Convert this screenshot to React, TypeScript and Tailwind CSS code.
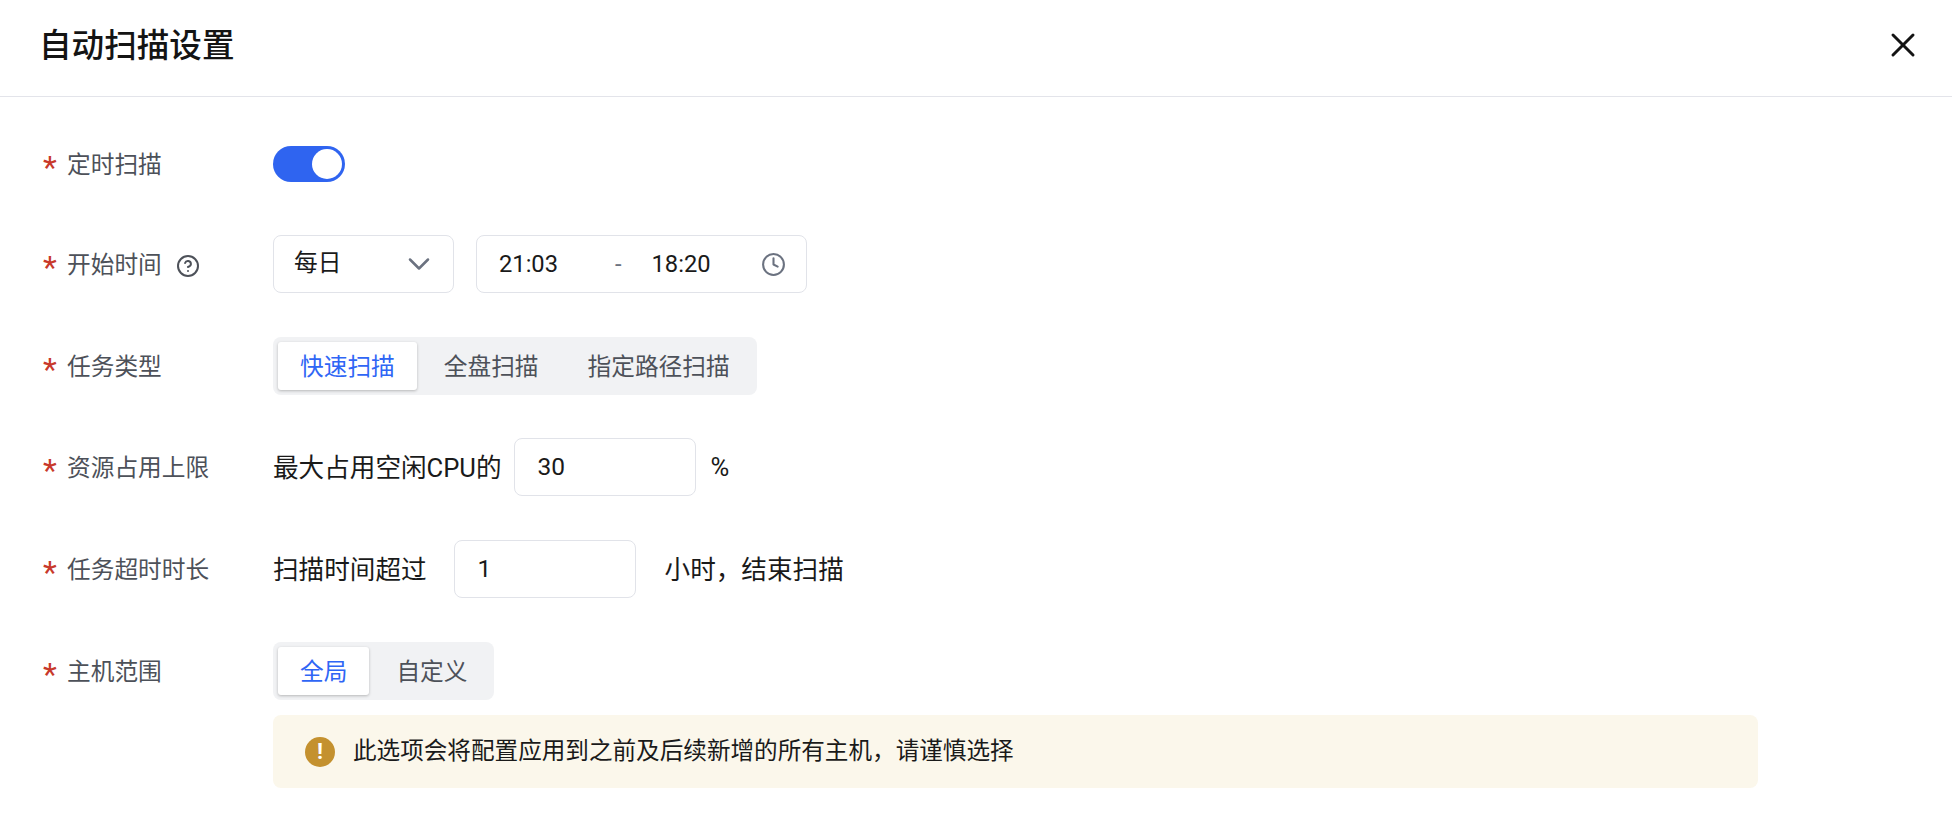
import { ReactNode } from "react";
import { ChevronDown, CircleHelp, Clock, X } from "lucide-react";

const FormRow = ({
  label,
  help,
  children,
  className = "",
}: {
  label: string;
  help?: boolean;
  children: ReactNode;
  className?: string;
}) => (
  <div className={`flex ${className}`}>
    <div className="w-[230px] h-[58px] flex items-center shrink-0 text-[#4d5159]">
      <span className="w-[24px] pt-[6px] text-[32px] leading-none text-[#c8392b]">*</span>
      <span className="pt-[3px]">{label}</span>
      {help && <CircleHelp className="ml-[14px] mt-[3px] w-[24px] h-[24px] text-[#4d5159]" strokeWidth={2} />}
    </div>
    <div className="flex-1">{children}</div>
  </div>
);

const Segmented = ({ options }: { options: string[] }) => (
  <div className="inline-flex h-[58px] p-[5px] gap-[5px] rounded-[8px] bg-[#f1f2f4]">
    {options.map((o, i) => (
      <div
        key={o}
        className={
          i === 0
            ? "h-[48px] px-[22px] pt-[3px] flex items-center rounded-[3px] bg-white text-[#2f66f5] shadow-[0_1px_3px_rgba(0,0,0,0.25)]"
            : "h-[48px] px-[22px] pt-[3px] flex items-center text-[#4d5159]"
        }
      >
        {o}
      </div>
    ))}
  </div>
);

const NumberBox = ({ value }: { value: string }) => (
  <div className="w-[182px] h-[58px] pl-[23px] flex items-center border border-[#e1e3e9] rounded-[8px] text-[24.5px] text-[#1a1a1a]">
    {value}
  </div>
);

export default function App() {
  return (
    <div
      className="w-[1952px] h-[832px] overflow-hidden bg-white text-[23.7px] text-[#1a1a1a]"
      style={{ fontFamily: 'Roboto, "Noto Sans CJK SC", sans-serif' }}
    >
      <header className="h-[97px] pl-[39px] pr-[40px] pb-[3px] flex items-center justify-between border-b border-[#e3e4ea]">
        <h1 className="text-[32.6px] font-medium text-[#141414]">自动扫描设置</h1>
        <X className="w-[40px] h-[40px] mr-[-11px] mb-[3px] text-[#141414]" strokeWidth={1.8} />
      </header>

      <div className="pl-[43px] pt-[38px]">
        <FormRow label="定时扫描">
          <div className="h-[58px] flex items-center">
            <div className="w-[72px] h-[36px] p-[3px] flex justify-end rounded-full bg-[#2f64f0]">
              <div className="w-[30px] h-[30px] rounded-full bg-white" />
            </div>
          </div>
        </FormRow>

        <FormRow label="开始时间" help className="mt-[42px]">
          <div className="flex gap-[22px]">
            <div className="w-[181px] h-[58px] pl-[20px] pr-[16px] flex items-center justify-between border border-[#e1e3e9] rounded-[8px]">
              <span>每日</span>
              <ChevronDown className="w-[36px] h-[36px] text-[#6b7280]" strokeWidth={1.7} />
            </div>
            <div className="w-[331px] h-[58px] pl-[22px] pr-[20px] flex items-center border border-[#e1e3e9] rounded-[8px]">
              <span className="pt-[1px]">21:03</span>
              <span className="ml-[57px] pt-[1px] text-[#6b7280]">-</span>
              <span className="ml-[30px] pt-[1px]">18:20</span>
              <Clock className="ml-auto w-[25px] h-[25px] text-[#6b7280]" strokeWidth={2} />
            </div>
          </div>
        </FormRow>

        <FormRow label="任务类型" className="mt-[44px]">
          <Segmented options={["快速扫描", "全盘扫描", "指定路径扫描"]} />
        </FormRow>

        <FormRow label="资源占用上限" className="mt-[43px]">
          <div className="flex items-center text-[25.6px]">
            <span className="pt-[3px]">最大占用空闲CPU的</span>
            <div className="ml-[12px]">
              <NumberBox value="30" />
            </div>
            <span className="ml-[15px] pt-[1px]">%</span>
          </div>
        </FormRow>

        <FormRow label="任务超时时长" className="mt-[44px]">
          <div className="flex items-center text-[25.6px]">
            <span className="pt-[3px]">扫描时间超过</span>
            <div className="ml-[27px]">
              <NumberBox value="1" />
            </div>
            <span className="ml-[29px] pt-[3px]">小时，结束扫描</span>
          </div>
        </FormRow>

        <FormRow label="主机范围" className="mt-[44px]">
          <Segmented options={["全局", "自定义"]} />
          <div className="w-[1485px] h-[73px] mt-[15px] pl-[32px] flex items-center rounded-[8px] bg-[#fbf7eb]">
            <span className="w-[30px] h-[30px] flex items-center justify-center rounded-full bg-[#c4912f] text-white font-bold text-[22px] leading-none">
              !
            </span>
            <span className="ml-[18px] text-[23.6px]">此选项会将配置应用到之前及后续新增的所有主机，请谨慎选择</span>
          </div>
        </FormRow>
      </div>
    </div>
  );
}
